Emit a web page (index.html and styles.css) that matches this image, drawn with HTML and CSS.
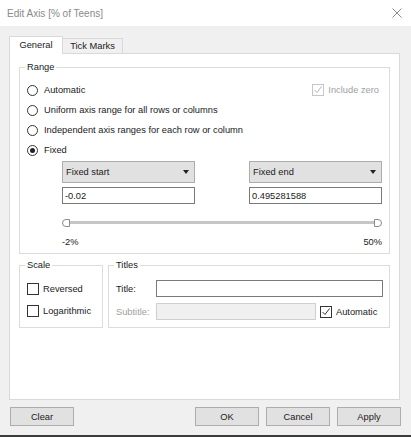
FILE: index.html
```html
<!DOCTYPE html>
<html>
<head>
<meta charset="utf-8">
<link rel="stylesheet" href="styles.css">
</head>
<body>
<div class="window">
  <div class="titlebar">
    <span class="title">Edit Axis [% of Teens]</span>
    <svg class="close" width="10" height="10" viewBox="0 0 10 10"><path d="M0.5 0.5L9.5 9.5M9.5 0.5L0.5 9.5" stroke="#8c8c8c" stroke-width="1" fill="none"/></svg>
  </div>
  <div class="body">
    <div class="tabs">
      <div class="tab active">General</div>
      <div class="tab second">Tick Marks</div>
    </div>
    <div class="panel">
      <div class="group range">
        <span class="legend">Range</span>
        <div class="radio-row">
          <span class="radio"></span><span>Automatic</span>
          <span class="incl"><span class="check disabled"><svg width="10" height="10" viewBox="0 0 10 10"><path d="M1.5 5L4 7.5L8.5 1.5" stroke="#b5b5b5" stroke-width="1" fill="none"/></svg></span><span class="muted">Include zero</span></span>
        </div>
        <div class="radio-row"><span class="radio"></span><span>Uniform axis range for all rows or columns</span></div>
        <div class="radio-row"><span class="radio"></span><span>Independent axis ranges for each row or column</span></div>
        <div class="radio-row"><span class="radio on"></span><span>Fixed</span></div>
        <div class="fixed">
          <div class="col">
            <div class="select"><span>Fixed start</span><span class="arrow"></span></div>
            <div class="input">-0.02</div>
          </div>
          <div class="col">
            <div class="select"><span>Fixed end</span><span class="arrow"></span></div>
            <div class="input">0.495281588</div>
          </div>
        </div>
        <div class="slider">
          <span class="thumb left"></span><span class="track"></span><span class="thumb right"></span>
        </div>
        <div class="slider-labels"><span>-2%</span><span>50%</span></div>
      </div>
      <div class="lower">
        <div class="group scale">
          <span class="legend">Scale</span>
          <div class="check-row"><span class="check"></span><span>Reversed</span></div>
          <div class="check-row"><span class="check"></span><span>Logarithmic</span></div>
        </div>
        <div class="group titles">
          <span class="legend">Titles</span>
          <div class="field-row first"><span class="flabel">Title:</span><div class="input wide"></div></div>
          <div class="field-row"><span class="flabel muted">Subtitle:</span><div class="input sub"></div>
            <span class="check on"><svg width="10" height="10" viewBox="0 0 10 10"><path d="M1.5 5L4 7.5L8.5 1.5" stroke="#333" stroke-width="1" fill="none"/></svg></span><span>Automatic</span>
          </div>
        </div>
      </div>
    </div>
    <div class="buttons">
      <div class="btn">Clear</div>
      <div class="spacer"></div>
      <div class="btn">OK</div>
      <div class="btn">Cancel</div>
      <div class="btn">Apply</div>
    </div>
  </div>
</div>
</body>
</html>
```
FILE: styles.css
```css
* { box-sizing: border-box; }
html, body { margin: 0; padding: 0; }
body {
  width: 411px;
  height: 437px;
  overflow: hidden;
  font-family: "Liberation Sans", Arial, sans-serif;
  font-size: 9.3px;
  color: #1a1a1a;
  background: #f0f0f0;
}
.window { width: 411px; height: 437px; display: flex; flex-direction: column; }
.titlebar {
  height: 26px;
  background: #fff;
  display: flex;
  align-items: center;
  justify-content: space-between;
  padding: 0 9px 0 7px;
  flex: none;
}
.title { color: #8a8a8a; font-size: 10px; }
.close { margin-top: -1px; }
.body {
  flex: 1;
  background: #f0f0f0;
  border-bottom: 2px solid #3c3c3c;
  padding: 10px 0 0 9px;
}
.tabs { display: flex; align-items: flex-end; height: 17px; }
.tab {
  height: 15px;
  display: flex;
  align-items: center;
  justify-content: center;
  border: 1px solid #d9d9d9;
  border-bottom: none;
  border-left: none;
  background: #f0f0f0;
}
.tab.second { width: 60px; }
.tab.active {
  height: 18px;
  margin-bottom: -1px;
  position: relative;
  z-index: 1;
  background: #fff;
  border-left: 1px solid #d9d9d9;
  padding: 0 0 2px 0;
  width: 54px;
}
.panel {
  width: 391px;
  height: 347px;
  background: #fff;
  border: 1px solid #d9d9d9;
  padding: 13px 9px 0 9px;
}
.group {
  position: relative;
  border: 1px solid #dcdcdc;
}
.legend {
  position: absolute;
  top: -7px;
  left: 5px;
  background: #fff;
  padding: 0 2px;
  line-height: 12px;
}
.range { height: 187px; padding: 12px 7px 0 7px; }
.radio-row {
  height: 20px;
  display: flex;
  align-items: center;
}
.radio {
  width: 11px;
  height: 11px;
  border: 1px solid #333;
  border-radius: 50%;
  margin-right: 6px;
  position: relative;
  flex: none;
}
.radio.on::after {
  content: "";
  position: absolute;
  left: 2px; top: 2px;
  width: 5px; height: 5px;
  border-radius: 50%;
  background: #222;
}
.incl { margin-left: auto; display: flex; align-items: center; margin-right: 3px; }
.check {
  width: 12px;
  height: 12px;
  border: 1px solid #333;
  background: #fff;
  margin-right: 4px;
  display: inline-flex;
  align-items: center;
  justify-content: center;
  flex: none;
}
.check.disabled { border-color: #c6c6c6; }
.muted { color: #a0a0a0; }
.fixed {
  display: flex;
  justify-content: space-between;
  padding-left: 35px;
  margin-top: 1px;
}
.col { width: 133px; }
.select {
  height: 22px;
  background: #e1e1e1;
  border: 1px solid #adadad;
  display: flex;
  align-items: center;
  justify-content: space-between;
  padding: 0 5px 0 3px;
}
.arrow {
  width: 0; height: 0;
  border-left: 3.5px solid transparent;
  border-right: 3.5px solid transparent;
  border-top: 4px solid #222;
}
.input {
  height: 17px;
  margin-top: 4px;
  border: 1px solid #7a7a7a;
  background: #fff;
  padding: 0 2px;
  display: flex;
  align-items: center;
}
.slider {
  margin: 14px 0 0 35px;
  height: 9px;
  display: flex;
  align-items: center;
}
.thumb {
  width: 8px;
  height: 8px;
  border: 1px solid #8a8a8a;
  background: #fff;
  flex: none;
}
.thumb.left { border-radius: 4px 0 0 4px; }
.thumb.right { border-radius: 0 4px 4px 0; }
.track { flex: 1; height: 3px; background: #c6c6c6; }
.slider-labels {
  display: flex;
  justify-content: space-between;
  margin: 9px 0 0 35px;
  line-height: 12px;
}
.lower { display: flex; gap: 5px; margin-top: 11px; }
.scale { width: 84px; height: 63px; padding: 12px 0 0 7px; }
.check-row { height: 22px; display: flex; align-items: center; }
.titles { flex: 1; height: 63px; padding: 14px 6px 0 7px; }
.field-row { display: flex; align-items: center; height: 17px; margin-bottom: 6px; }
.flabel { width: 40px; }
.input.wide { flex: 1; height: 17px; margin-top: 0; }
.input.sub { width: 160px; height: 17px; margin-top: 0; background: #f0f0f0; border-color: #cfcfcf; margin-right: 4px; }
.check.on { border-color: #333; }
.buttons {
  display: flex;
  gap: 7px;
  padding: 7px 10px 0 1px;
}
.spacer { flex: 1; }
.btn {
  width: 64px;
  height: 19px;
  background: #e1e1e1;
  border: 1px solid #adadad;
  display: flex;
  align-items: center;
  justify-content: center;
}
```
